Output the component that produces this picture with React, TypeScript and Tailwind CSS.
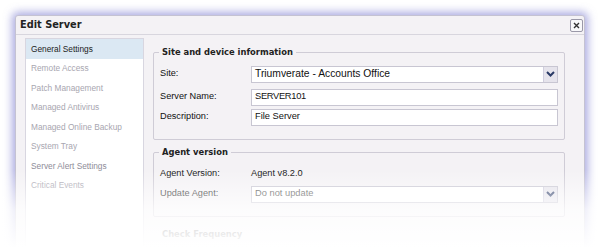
const navItems = [
  'General Settings',
  'Remote Access',
  'Patch Management',
  'Managed Antivirus',
  'Managed Online Backup',
  'System Tray',
  'Server Alert Settings',
  'Critical Events',
]

function Chevron() {
  return (
    <svg width="9" height="6" viewBox="0 0 9 6">
      <path d="M1 1 L4.5 4.5 L8 1" fill="none" stroke="#2a3a66" strokeWidth="2" />
    </svg>
  )
}

function Fieldset({ legend, children }: { legend: string; children: React.ReactNode }) {
  return (
    <div className="relative border border-[#cfccd6] rounded-[2px] px-[6px] pt-[11px] pb-[12px]">
      <div className="absolute -top-[7px] left-[5px] px-[3px] bg-[#f4f2f5] text-[8.4px] font-bold text-[#222] font-['DejaVu_Sans',sans-serif] leading-[13px]">
        {legend}
      </div>
      {children}
    </div>
  )
}

function Row({ label, children }: { label: string; children: React.ReactNode }) {
  return (
    <div className="flex items-center h-[20px]">
      <div className="w-[91px] text-[9.2px] text-[#111]">{label}</div>
      <div className="flex-1">{children}</div>
    </div>
  )
}

export default function App() {
  return (
    <div className="w-[600px] h-[248px] bg-white relative overflow-hidden font-['Liberation_Sans',Arial,sans-serif]">
      <div className="ml-[15px] mt-[15px] w-[570px] h-[270px] bg-[#f4f2f5] border border-[#c4c2d2] rounded-t-[3px] shadow-[0_0_9px_3px_rgba(105,105,200,0.55)]">
        <div className="h-[19px] flex items-center justify-between pl-[4px] pr-[1px] border-b border-[#d8d6de]">
          <span className="text-[9.8px] font-bold text-[#222] font-['DejaVu_Sans',sans-serif]">Edit Server</span>
          <div className="w-[13px] h-[13px] border border-[#9a98a8] rounded-[2px] bg-[#f8f8fa] flex items-center justify-center">
            <svg width="7" height="7" viewBox="0 0 7 7">
              <path d="M1 1 L6 6 M6 1 L1 6" stroke="#333" strokeWidth="1.4" />
            </svg>
          </div>
        </div>
        <div className="flex pl-[9px] pr-[19px] pt-[3px]">
          <div className="w-[119px] h-[240px] bg-white border border-[#d8d6e0] text-[8.3px]">
            {navItems.map((item, i) => (
              <div
                key={item}
                className={`h-[19.5px] flex items-center pl-[5px] ${
                  i === 0 ? 'bg-[#dbe8f3] text-[#222]' : i === 6 ? 'text-[#8e8c98]' : 'text-[#a8a6b0]'
                }`}
              >
                {item}
              </div>
            ))}
          </div>
          <div className="flex-1 pl-[9px] pt-[14px]">
            <Fieldset legend="Site and device information">
              <div className="mb-[3px]">
                <Row label="Site:">
                  <div className="h-[17px] border border-[#c8c6d2] bg-white flex items-center text-[10.3px] text-[#111] pl-[3px] relative">
                    Triumverate - Accounts Office
                    <div className="absolute right-0 top-0 bottom-0 w-[14px] bg-[#e6e4ec] border-l border-[#d0cede] flex items-center justify-center">
                      <Chevron />
                    </div>
                  </div>
                </Row>
              </div>
              <Row label="Server Name:">
                <div className="h-[17px] border border-[#c8c6d2] bg-white flex items-center text-[9.3px] text-[#111] pl-[3px] tracking-[-0.3px]">SERVER101</div>
              </Row>
              <Row label="Description:">
                <div className="h-[17px] border border-[#c8c6d2] bg-white flex items-center text-[9.3px] text-[#111] pl-[3px]">File Server</div>
              </Row>
            </Fieldset>
            <div className="h-[12px]" />
            <Fieldset legend="Agent version">
              <Row label="Agent Version:">
                <div className="text-[9.2px] text-[#111]">Agent v8.2.0</div>
              </Row>
              <Row label="Update Agent:">
                <div className="h-[17px] border border-[#c8c6d2] bg-white flex items-center text-[9.3px] text-[#444] pl-[3px] relative">
                  Do not update
                  <div className="absolute right-0 top-0 bottom-0 w-[14px] bg-[#e6e4ec] border-l border-[#d0cede] flex items-center justify-center">
                    <Chevron />
                  </div>
                </div>
              </Row>
            </Fieldset>
            <div className="pl-[9px] pt-[11px] text-[8.4px] font-bold text-[#222] font-['DejaVu_Sans',sans-serif]">Check Frequency</div>
          </div>
        </div>
      </div>
      <div className="absolute left-0 right-0 top-[170px] bottom-0 bg-gradient-to-b from-white/0 via-white/75 to-white" />
    </div>
  )
}
